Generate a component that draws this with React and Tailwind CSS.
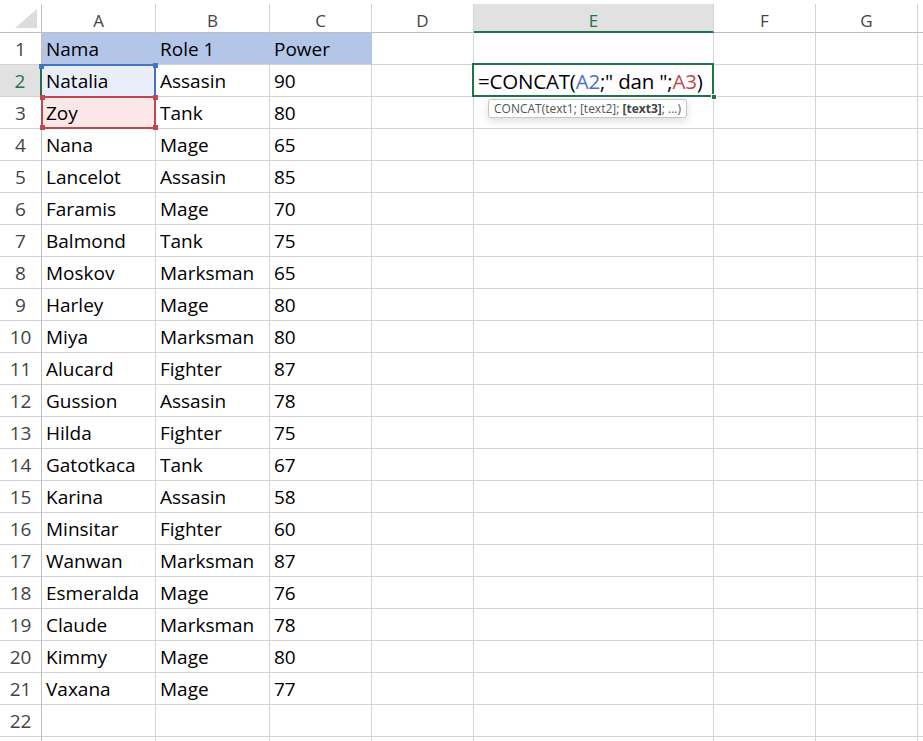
import React from 'react';

const COLS = [
  { key: 'A', w: 'w-[114px]' },
  { key: 'B', w: 'w-[114px]' },
  { key: 'C', w: 'w-[102px]' },
  { key: 'D', w: 'w-[102px]' },
  { key: 'E', w: 'w-[240px]' },
  { key: 'F', w: 'w-[102px]' },
  { key: 'G', w: 'w-[102px]' },
  { key: 'H', w: 'w-[102px]' },
];

const DATA = [
  ['Nama', 'Role 1', 'Power'],
  ['Natalia', 'Assasin', '90'],
  ['Zoy', 'Tank', '80'],
  ['Nana', 'Mage', '65'],
  ['Lancelot', 'Assasin', '85'],
  ['Faramis', 'Mage', '70'],
  ['Balmond', 'Tank', '75'],
  ['Moskov', 'Marksman', '65'],
  ['Harley', 'Mage', '80'],
  ['Miya', 'Marksman', '80'],
  ['Alucard', 'Fighter', '87'],
  ['Gussion', 'Assasin', '78'],
  ['Hilda', 'Fighter', '75'],
  ['Gatotkaca', 'Tank', '67'],
  ['Karina', 'Assasin', '58'],
  ['Minsitar', 'Fighter', '60'],
  ['Wanwan', 'Marksman', '87'],
  ['Esmeralda', 'Mage', '76'],
  ['Claude', 'Marksman', '78'],
  ['Kimmy', 'Mage', '80'],
  ['Vaxana', 'Mage', '77'],
  ['', '', ''],
  ['', '', ''],
];

function Handle({ pos, color }) {
  return <span className={`absolute w-[5px] h-[5px] ${pos} ${color}`} />;
}

function Cell({ r, c, col, value }) {
  const isHeaderFill = r === 1 && c <= 2;
  let cls = `relative shrink-0 h-full ${col.w} border-r border-b border-[#d4d4d4] pl-[4px] pt-[1px] leading-[30px] whitespace-nowrap text-black`;
  if (isHeaderFill) cls = `relative shrink-0 h-full ${col.w} border-r border-b border-b-[#d4d4d4] border-r-[#b4c6e7] bg-[#b4c6e7] pl-[4px] pt-[1px] leading-[30px] whitespace-nowrap text-black`;
  if (r === 2 && c === 0) cls += ' bg-[#e9eef9]';
  if (r === 3 && c === 0) cls += ' bg-[#fbe7e7]';

  return (
    <div className={cls}>
      {r === 2 && c === 0 && (
        <div className="absolute -top-[1px] left-0 -right-[1px] -bottom-[1px] border-t-2 border-r-2 border-[#4472c4] z-10">
          <Handle pos="-top-[2px] -left-[3px]" color="bg-[#4472c4]" />
          <Handle pos="-top-[3px] -right-[4px]" color="bg-[#4472c4]" />
        </div>
      )}
      {r === 3 && c === 0 && (
        <div className="absolute -top-[1px] -left-[1px] -right-[1px] -bottom-[1px] border-2 border-[#c0474f] z-20">
          <Handle pos="-top-[3px] -left-[3px]" color="bg-[#c0474f]" />
          <Handle pos="-top-[3px] -right-[4px]" color="bg-[#c0474f]" />
          <Handle pos="-bottom-[3px] -left-[3px]" color="bg-[#c0474f]" />
          <Handle pos="-bottom-[3px] -right-[4px]" color="bg-[#c0474f]" />
        </div>
      )}
      {r === 2 && c === 4 && (
        <>
          <div className="absolute -top-[2px] -left-[2px] -right-[1px] -bottom-[1px] border-2 border-[#217346] z-20">
            <span className="absolute -right-[5px] -bottom-[5px] w-[6px] h-[6px] bg-[#217346] border border-white" />
          </div>
          <div className="absolute left-[14px] top-[34px] z-30 h-[19px] px-[5px] bg-white border border-[#c6c6c6] rounded-[3px] shadow-[0_3px_8px_rgba(0,0,0,0.14)] text-[12px] leading-[17px] text-[#555] font-['Open_Sans',sans-serif] whitespace-nowrap">
            CONCAT(text1; [text2]; <b className="font-bold text-[#444]">[text3]</b>; ...)
          </div>
        </>
      )}
      <span className="relative z-30">
        {r === 2 && c === 4 ? (
          <span className="text-[20.5px] tracking-[-0.2px]">
            =CONCAT(<span className="text-[#4472c4]">A2</span>;" dan ";<span className="text-[#c0474f]">A3</span>)
          </span>
        ) : (
          value
        )}
      </span>
    </div>
  );
}

export default function App() {
  return (
    <div className="w-[923px] h-[741px] overflow-hidden bg-white font-['Open_Sans',sans-serif]">
      {/* column headers */}
      <div className="flex h-[33px] pt-[4px]">
        <div className="relative shrink-0 w-[42px] h-full border-r border-b border-[#bfbfbf]">
          <svg className="absolute left-0 top-0" width="41" height="28" viewBox="0 0 41 28">
            <polygon points="15,24 37,24 37,5" fill="#dcdcdc" />
          </svg>
        </div>
        {COLS.map((col) => {
          const active = col.key === 'E';
          return (
            <div
              key={col.key}
              className={
                active
                  ? `shrink-0 h-full ${col.w} border-r border-r-[#d4d4d4] border-b-2 border-b-[#217346] bg-[#e1e1e1] text-[#217346] text-center text-[17px] leading-[17px] pt-[8px]`
                  : `shrink-0 h-full ${col.w} border-r border-r-[#d4d4d4] border-b border-b-[#bfbfbf] text-[#444] text-center text-[17px] leading-[17px] pt-[8px]`
              }
            >
              {col.key === 'H' ? '' : col.key}
            </div>
          );
        })}
      </div>
      {/* rows */}
      {DATA.map((row, i) => {
        const r = i + 1;
        const activeRow = r === 2;
        return (
          <div key={r} className="flex h-[32px] text-[19px]">
            <div
              className={
                activeRow
                  ? 'shrink-0 w-[42px] h-full border-r-2 border-r-[#217346] border-b border-b-[#d4d4d4] bg-[#e1e1e1] text-[#217346] text-center pt-[1px] leading-[30px]'
                  : 'shrink-0 w-[42px] h-full border-r border-r-[#bfbfbf] border-b border-b-[#d4d4d4] text-[#444] text-center pt-[1px] leading-[30px]'
              }
            >
              {r === 23 ? '' : r}
            </div>
            {COLS.map((col, c) => (
              <Cell key={col.key} r={r} c={c} col={col} value={c < 3 ? row[c] : ''} />
            ))}
          </div>
        );
      })}
    </div>
  );
}
